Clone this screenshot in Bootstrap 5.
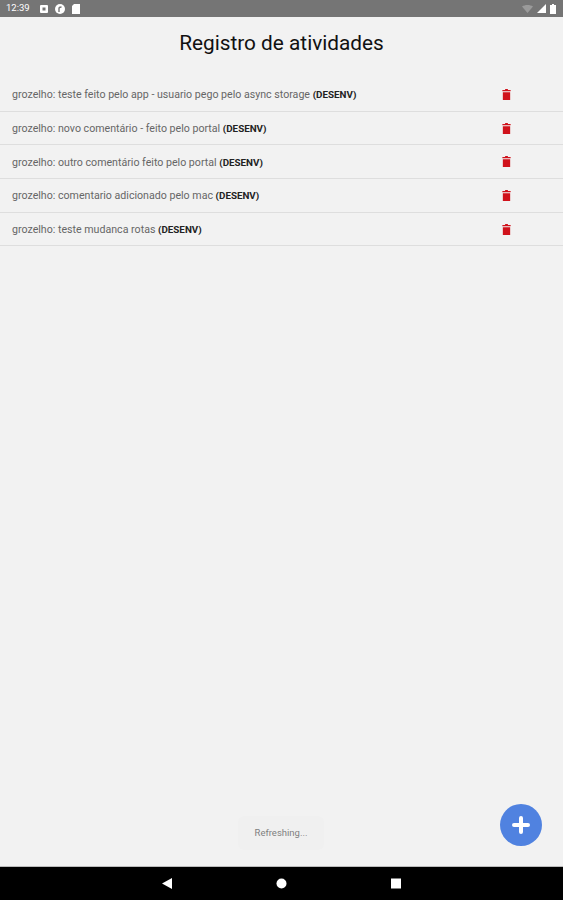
<!DOCTYPE html>
<html lang="pt">
<head>
    <meta charset="UTF-8">
    <meta name="viewport" content="width=device-width, initial-scale=1.0">
    <title>Registro de atividades</title>
    <link href="https://cdn.jsdelivr.net/npm/bootstrap@5.3.0/dist/css/bootstrap.min.css" rel="stylesheet">
    <style>
        body {
            font-family: Roboto, "Liberation Sans", sans-serif;
            background-color: #f2f2f2;
            width: 563px;
            height: 900px;
            overflow: hidden;
        }
        .app-shell { height: 900px; }
        .status-bar {
            height: 17px;
            background-color: #757575;
            color: #fff;
            font-size: 9.5px;
            padding: 0 7px 0 6px;
        }
        .status-left { gap: 7px; }
        .status-time { margin-right: 3px; }
        .screen-title {
            font-size: 20.8px;
            line-height: 24px;
            color: #111;
            padding-top: 14px;
            height: 61px;
        }
        .activity-row {
            height: 33.7px;
            border-bottom: 1px solid #dedede;
            padding: 2px 52px 0 12px;
            font-size: 10.64px;
            color: #666;
        }
        .activity-row svg { margin-top: -2px; }
        .activity-row b { color: #222; font-size: 9.8px; }
        .screen-body { position: relative; }
        .refresh-toast {
            position: absolute;
            left: 238px;
            bottom: 16px;
            width: 86px;
            height: 34px;
            background-color: #f0f0f0;
            border-radius: 6px;
            color: #808080;
            font-size: 9.5px;
        }
        .add-fab {
            position: absolute;
            right: 21px;
            bottom: 20px;
            width: 42px;
            height: 42px;
            border: 0;
            padding: 0;
            border-radius: 50%;
            background-color: #5082e0;
        }
        .nav-strip {
            height: 34px;
            background-color: #000;
            border-top: 1px solid #bbb;
        }
    </style>
</head>
<body>
    <div class="app-shell d-flex flex-column">
        <div class="status-bar d-flex align-items-center justify-content-between">
            <div class="status-left d-flex align-items-center">
                <span class="status-time">12:39</span>
                <svg width="8" height="8" viewBox="0 0 8 8"><rect width="8" height="8" rx="1" fill="#fff"/><rect x="2.5" y="2.5" width="3" height="3" fill="#757575"/></svg>
                <svg width="10" height="10" viewBox="0 0 10 10"><circle cx="5" cy="5" r="5" fill="#fff"/><path d="M4 8V4.500C4 3.500 5 3 6.500 3" stroke="#757575" stroke-width="1.4" fill="none"/></svg>
                <svg width="8" height="10" viewBox="0 0 8 10"><path d="M2 0H8V10H0V2Z" fill="#fff"/></svg>
            </div>
            <div class="d-flex align-items-center gap-1">
                <svg width="11" height="8" viewBox="0 0 11 8"><path d="M0 1.500C3 -.5 8 -.5 11 1.500L5.500 8Z" fill="#9a9a9a"/></svg>
                <svg width="9" height="9" viewBox="0 0 9 9"><path d="M9 0V9H0Z" fill="#fff"/></svg>
                <svg width="6" height="10" viewBox="0 0 6 10"><path d="M2 0H4V1H6V10H0V1H2Z" fill="#fff"/></svg>
            </div>
        </div>

        <div class="screen-body flex-grow-1">
            <h1 class="screen-title fw-normal text-center m-0">Registro de atividades</h1>
            <div class="activity-row d-flex align-items-center justify-content-between">
                <span>grozelho: teste feito pelo app - usuario pego pelo async storage <b>(DESENV)</b></span>
                <svg width="9" height="11" viewBox="0 0 9 12"><path d="M3 0H6V1H9V2.500H0V1H3ZM.5 3.500H8.500V12H.5Z" fill="#d0121b"/></svg>
            </div>
            <div class="activity-row d-flex align-items-center justify-content-between">
                <span>grozelho: novo comentário - feito pelo portal <b>(DESENV)</b></span>
                <svg width="9" height="11" viewBox="0 0 9 12"><path d="M3 0H6V1H9V2.500H0V1H3ZM.5 3.500H8.500V12H.5Z" fill="#d0121b"/></svg>
            </div>
            <div class="activity-row d-flex align-items-center justify-content-between">
                <span>grozelho: outro comentário feito pelo portal <b>(DESENV)</b></span>
                <svg width="9" height="11" viewBox="0 0 9 12"><path d="M3 0H6V1H9V2.500H0V1H3ZM.5 3.500H8.500V12H.5Z" fill="#d0121b"/></svg>
            </div>
            <div class="activity-row d-flex align-items-center justify-content-between">
                <span>grozelho: comentario adicionado pelo mac <b>(DESENV)</b></span>
                <svg width="9" height="11" viewBox="0 0 9 12"><path d="M3 0H6V1H9V2.500H0V1H3ZM.5 3.500H8.500V12H.5Z" fill="#d0121b"/></svg>
            </div>
            <div class="activity-row d-flex align-items-center justify-content-between">
                <span>grozelho: teste mudanca rotas <b>(DESENV)</b></span>
                <svg width="9" height="11" viewBox="0 0 9 12"><path d="M3 0H6V1H9V2.500H0V1H3ZM.5 3.500H8.500V12H.5Z" fill="#d0121b"/></svg>
            </div>

            <div class="refresh-toast d-flex align-items-center justify-content-center">Refreshing...</div>
            <button class="add-fab d-flex align-items-center justify-content-center" type="button" aria-label="Adicionar">
                <svg width="18" height="18" viewBox="0 0 18 18"><path d="M9 2V16M2 9H16" stroke="#fff" stroke-width="4" stroke-linecap="round"/></svg>
            </button>
        </div>

        <div class="nav-strip d-flex align-items-center">
            <svg width="563" height="33" viewBox="0 0 563 33">
                <path d="M162 16.500L172 11V22Z" fill="#fff"/>
                <circle cx="281.500" cy="16.500" r="5" fill="#fff"/>
                <rect x="391" y="11.500" width="10" height="10" fill="#fff"/>
            </svg>
        </div>
    </div>

    <script src="https://cdn.jsdelivr.net/npm/bootstrap@5.3.0/dist/js/bootstrap.bundle.min.js"></script>
</body>
</html>
